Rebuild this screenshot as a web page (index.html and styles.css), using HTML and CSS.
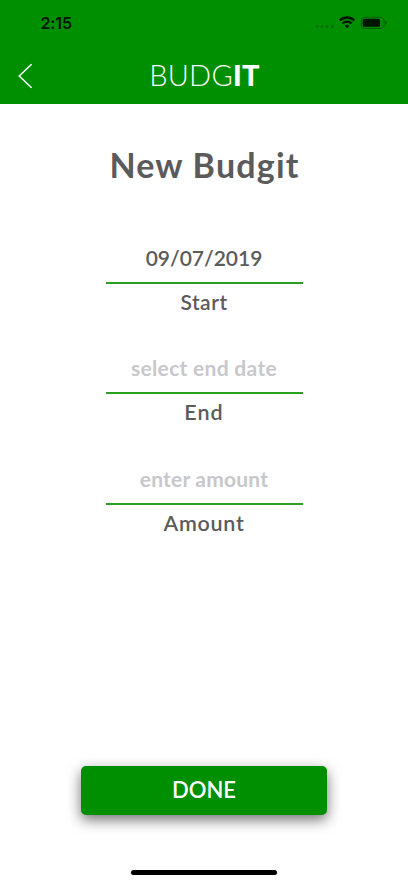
FILE: index.html
```html
<!DOCTYPE html>
<html lang="en">
<head>
<meta charset="utf-8">
<title>Budgit</title>
<link rel="stylesheet" href="styles.css">
</head>
<body>
<div class="screen">
  <header class="header">
    <div class="status">
      <span class="time">2:15</span>
      <svg class="indicators" width="72" height="16" viewBox="0 0 72 16">
        <g fill="#007000"><circle cx="2.2" cy="11.5" r="1.4"/><circle cx="7.2" cy="11.5" r="1.4"/><circle cx="12.2" cy="11.5" r="1.4"/><circle cx="17.2" cy="11.5" r="1.4"/></g>
        <g fill="none" stroke="#001500" stroke-width="2.3"><path d="M24.7 5.4a10.6 10.6 0 0 1 14.6 0"/><path d="M27.4 8.5a6.7 6.7 0 0 1 9.2 0"/></g>
        <path d="M29.6 10.8a3.5 3.5 0 0 1 4.8 0L32 13.3z" fill="#001500"/>
        <rect x="46.2" y="2.2" width="22.8" height="11.2" rx="3.2" fill="none" stroke="#005c00"/>
        <rect x="47.7" y="3.8" width="17.4" height="8" rx="1.6" fill="#001500"/>
        <path d="M70.2 5.8v4c1.9-.7 1.9-3.3 0-4z" fill="#005c00"/>
      </svg>
    </div>
    <div class="navbar">
      <svg class="back" width="16" height="26" viewBox="0 0 16 26"><path d="M13.6 1.2 1.2 13 13.6 24.8" fill="none" stroke="#fff" stroke-width="1.5"/></svg>
      <div class="logo"><span class="logo-light">BUDG</span><span class="logo-bold">IT</span></div>
    </div>
  </header>
  <main class="content">
    <h1 class="title">New Budgit</h1>
    <div class="field"><div class="value date">09/07/2019</div><div class="label start">Start</div></div>
    <div class="field"><div class="value placeholder end-date">select end date</div><div class="label end">End</div></div>
    <div class="field"><div class="value placeholder amount-value">enter amount</div><div class="label amount">Amount</div></div>
  </main>
  <footer class="footer">
    <button class="done">DONE</button>
    <div class="home-indicator"></div>
  </footer>
</div>
</body>
</html>
```
FILE: styles.css
```css
* { box-sizing: border-box; }
body { margin: 0; background: #fff; font-family: Lato, sans-serif; color: #5b5b5b; }
.screen { width: 408px; height: 883px; display: flex; flex-direction: column; overflow: hidden; }
.header { height: 103.5px; background: #008f00; }
.status { height: 46px; padding: 0 22px 0 40.5px; display: flex; align-items: center; justify-content: space-between; }
.time { font: 600 16px/20px Inter, sans-serif; color: #001500; letter-spacing: -0.1px; }
.indicators { display: block; margin-right: -1px; }
.navbar { display: grid; grid-template-columns: 60px 1fr 60px; align-items: center; height: 58px; }
.back { margin-left: 18px; margin-top: 2px; }
.logo { text-align: center; color: #fff; font-size: 29px; line-height: 36px; white-space: nowrap; letter-spacing: 0.25px; padding-left: 1px; }
.logo-light { font-weight: 300; }
.logo-bold { font-weight: 900; }
.content { flex: 1; display: flex; flex-direction: column; align-items: center; }
.title { margin: 39.5px 0 47px; font-size: 34px; line-height: 44px; font-weight: 700; letter-spacing: 1.2px; padding-left: 1px; white-space: nowrap; }
.field { width: 197px; height: 110.4px; text-align: center; font-size: 21px; font-weight: 600; white-space: nowrap; }
.value { height: 50px; padding-top: 8px; line-height: 32px; border-bottom: 2px solid #2aa021; }
.placeholder { color: #c7c7cc; font-weight: 700; }
.end-date { letter-spacing: 0.3px; }
.amount-value { letter-spacing: 0.2px; }
.label { line-height: 26px; margin-top: 5px; }
.start { letter-spacing: 0.5px; }
.end { font-size: 21.5px; letter-spacing: 1px; }
.amount { font-size: 21.5px; letter-spacing: 0.7px; }
.footer { height: 117.5px; display: flex; flex-direction: column; align-items: center; }
.done { width: 246px; height: 49px; padding: 0; border: 0; border-radius: 5px; background: #008f00; color: #fff; font: 600 22px/48px Lato, sans-serif; box-shadow: 0 5px 14px rgba(0,0,0,.55); }
.home-indicator { margin-top: 55px; width: 146px; height: 5px; border-radius: 3px; background: #000; }
```
